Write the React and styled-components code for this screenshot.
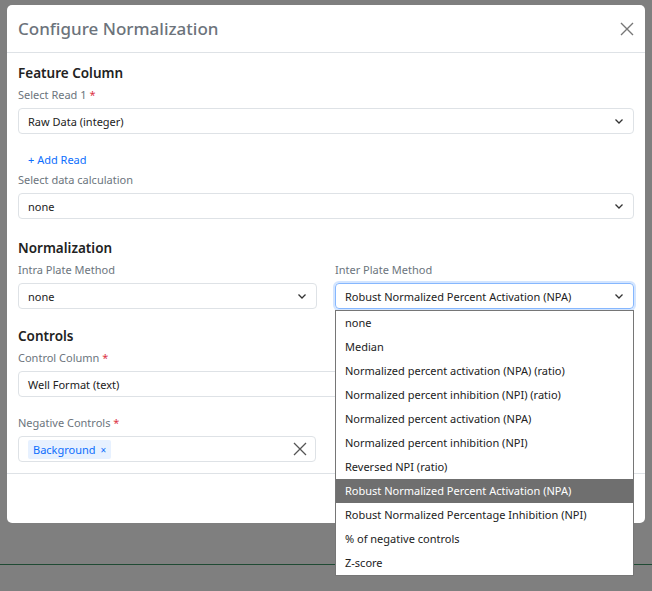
import React from "react";
import styled, { createGlobalStyle } from "styled-components";

const Global = createGlobalStyle`
  body { margin: 0; font-family: "Noto Sans", "Open Sans", sans-serif; }
`;

const options = [
  "none",
  "Median",
  "Normalized percent activation (NPA) (ratio)",
  "Normalized percent inhibition (NPI) (ratio)",
  "Normalized percent activation (NPA)",
  "Normalized percent inhibition (NPI)",
  "Reversed NPI (ratio)",
  "Robust Normalized Percent Activation (NPA)",
  "Robust Normalized Percentage Inhibition (NPI)",
  "% of negative controls",
  "Z-score",
];

const Chevron = () => (
  <svg width="12" height="12" viewBox="0 0 12 12">
    <path d="M2.5 4.5 6 8l3.5-3.5" fill="none" stroke="#333" strokeWidth="1.3" />
  </svg>
);

export default function App() {
  return (
    <Backdrop>
      <Global />
      <GreenLine />
      <Modal>
        <Header>
          <Title>Configure Normalization</Title>
          <Close>
            <svg width="14" height="14" viewBox="0 0 14 14">
              <path d="M1 1l12 12M13 1 1 13" stroke="#777" strokeWidth="1.4" />
            </svg>
          </Close>
        </Header>
        <Body>
          <Heading>Feature Column</Heading>
          <Label>Select Read 1 <Req>*</Req></Label>
          <Select>Raw Data (integer)<Chevron /></Select>
          <AddRead>+ Add Read</AddRead>
          <Label>Select data calculation</Label>
          <Select>none<Chevron /></Select>
          <Heading $top={20}>Normalization</Heading>
          <Row>
            <Col>
              <Label>Intra Plate Method</Label>
              <Select>none<Chevron /></Select>
            </Col>
            <Col>
              <Label>Inter Plate Method</Label>
              <Select $focus>Robust Normalized Percent Activation (NPA)<Chevron /></Select>
              <Menu>
                {options.map((o, i) => (
                  <Item key={o} $active={i === 7}>{o}</Item>
                ))}
              </Menu>
            </Col>
          </Row>
          <Heading $top={18}>Controls</Heading>
          <Label>Control Column <Req>*</Req></Label>
          <Select>Well Format (text)<Chevron /></Select>
          <Label $top={18}>Negative Controls <Req>*</Req></Label>
          <Half>
            <Select>
              <Tag>Background <span>×</span></Tag>
              <svg width="14" height="14" viewBox="0 0 14 14">
                <path d="M1 1l12 12M13 1 1 13" stroke="#555" strokeWidth="1.3" />
              </svg>
            </Select>
          </Half>
        </Body>
        <Footer />
      </Modal>
    </Backdrop>
  );
}

const Backdrop = styled.div`
  position: relative;
  width: 652px;
  height: 591px;
  background: #7f7f7f;
  padding: 5px 7px;
  box-sizing: border-box;
  overflow: hidden;
`;

const GreenLine = styled.div`
  position: absolute;
  left: 0;
  right: 0;
  top: 564px;
  height: 1px;
  background: #1f4a33;
`;

const Modal = styled.div`
  position: relative;
  background: #fff;
  border-radius: 5px;
  height: 518px;
  display: flex;
  flex-direction: column;
`;

const Header = styled.div`
  height: 47px;
  border-bottom: 1px solid #dee2e6;
  display: flex;
  align-items: center;
  justify-content: space-between;
  padding: 0 11px;
`;

const Title = styled.div`
  font-size: 17px;
  font-weight: 500;
  color: #6c737b;
`;

const Close = styled.div`
  display: flex;
`;

const Body = styled.div`
  padding: 11px 11px 0;
  flex: 1;
`;

const Heading = styled.div`
  font-size: 13.5px;
  font-weight: 600;
  color: #222;
  margin-top: ${(p) => p.$top || 0}px;
  line-height: 18px;
`;

const Label = styled.div`
  font-size: 11px;
  color: #6c757d;
  margin: ${(p) => p.$top || 5}px 0 6px;
  line-height: 15px;
`;

const Req = styled.span`
  color: #dc3545;
`;

const Select = styled.div`
  height: 26px;
  box-sizing: border-box;
  border: 1px solid ${(p) => (p.$focus ? "#86b7fe" : "#dee2e6")};
  box-shadow: ${(p) => (p.$focus ? "0 0 0 2px rgba(13,110,253,0.18)" : "none")};
  border-radius: 4px;
  display: flex;
  align-items: center;
  justify-content: space-between;
  padding: 0 8px 0 9px;
  font-size: 11px;
  color: #222;
`;

const AddRead = styled.div`
  font-size: 11px;
  color: #0d6efd;
  margin: 18px 0 0 10px;
  line-height: 15px;
`;

const Row = styled.div`
  display: grid;
  grid-template-columns: 1fr 1fr;
  gap: 18px;
`;

const Col = styled.div`
  position: relative;
`;

const Half = styled.div`
  width: 298px;
`;

const Menu = styled.div`
  position: absolute;
  top: 53px;
  left: 0;
  right: 0;
  background: #fff;
  border: 1px solid #767676;
  z-index: 5;
`;

const Item = styled.div`
  height: 24px;
  line-height: 24px;
  padding: 0 9px;
  font-size: 11px;
  color: ${(p) => (p.$active ? "#fff" : "#222")};
  background: ${(p) => (p.$active ? "#6f6f6f" : "#fff")};
  white-space: nowrap;
`;

const Tag = styled.span`
  background: #e7f1ff;
  color: #0d6efd;
  border-radius: 2px;
  padding: 2px 5px;
  font-size: 11px;
  span { font-size: 10px; margin-left: 2px; }
`;

const Footer = styled.div`
  height: 49px;
  border-top: 1px solid #dee2e6;
`;
